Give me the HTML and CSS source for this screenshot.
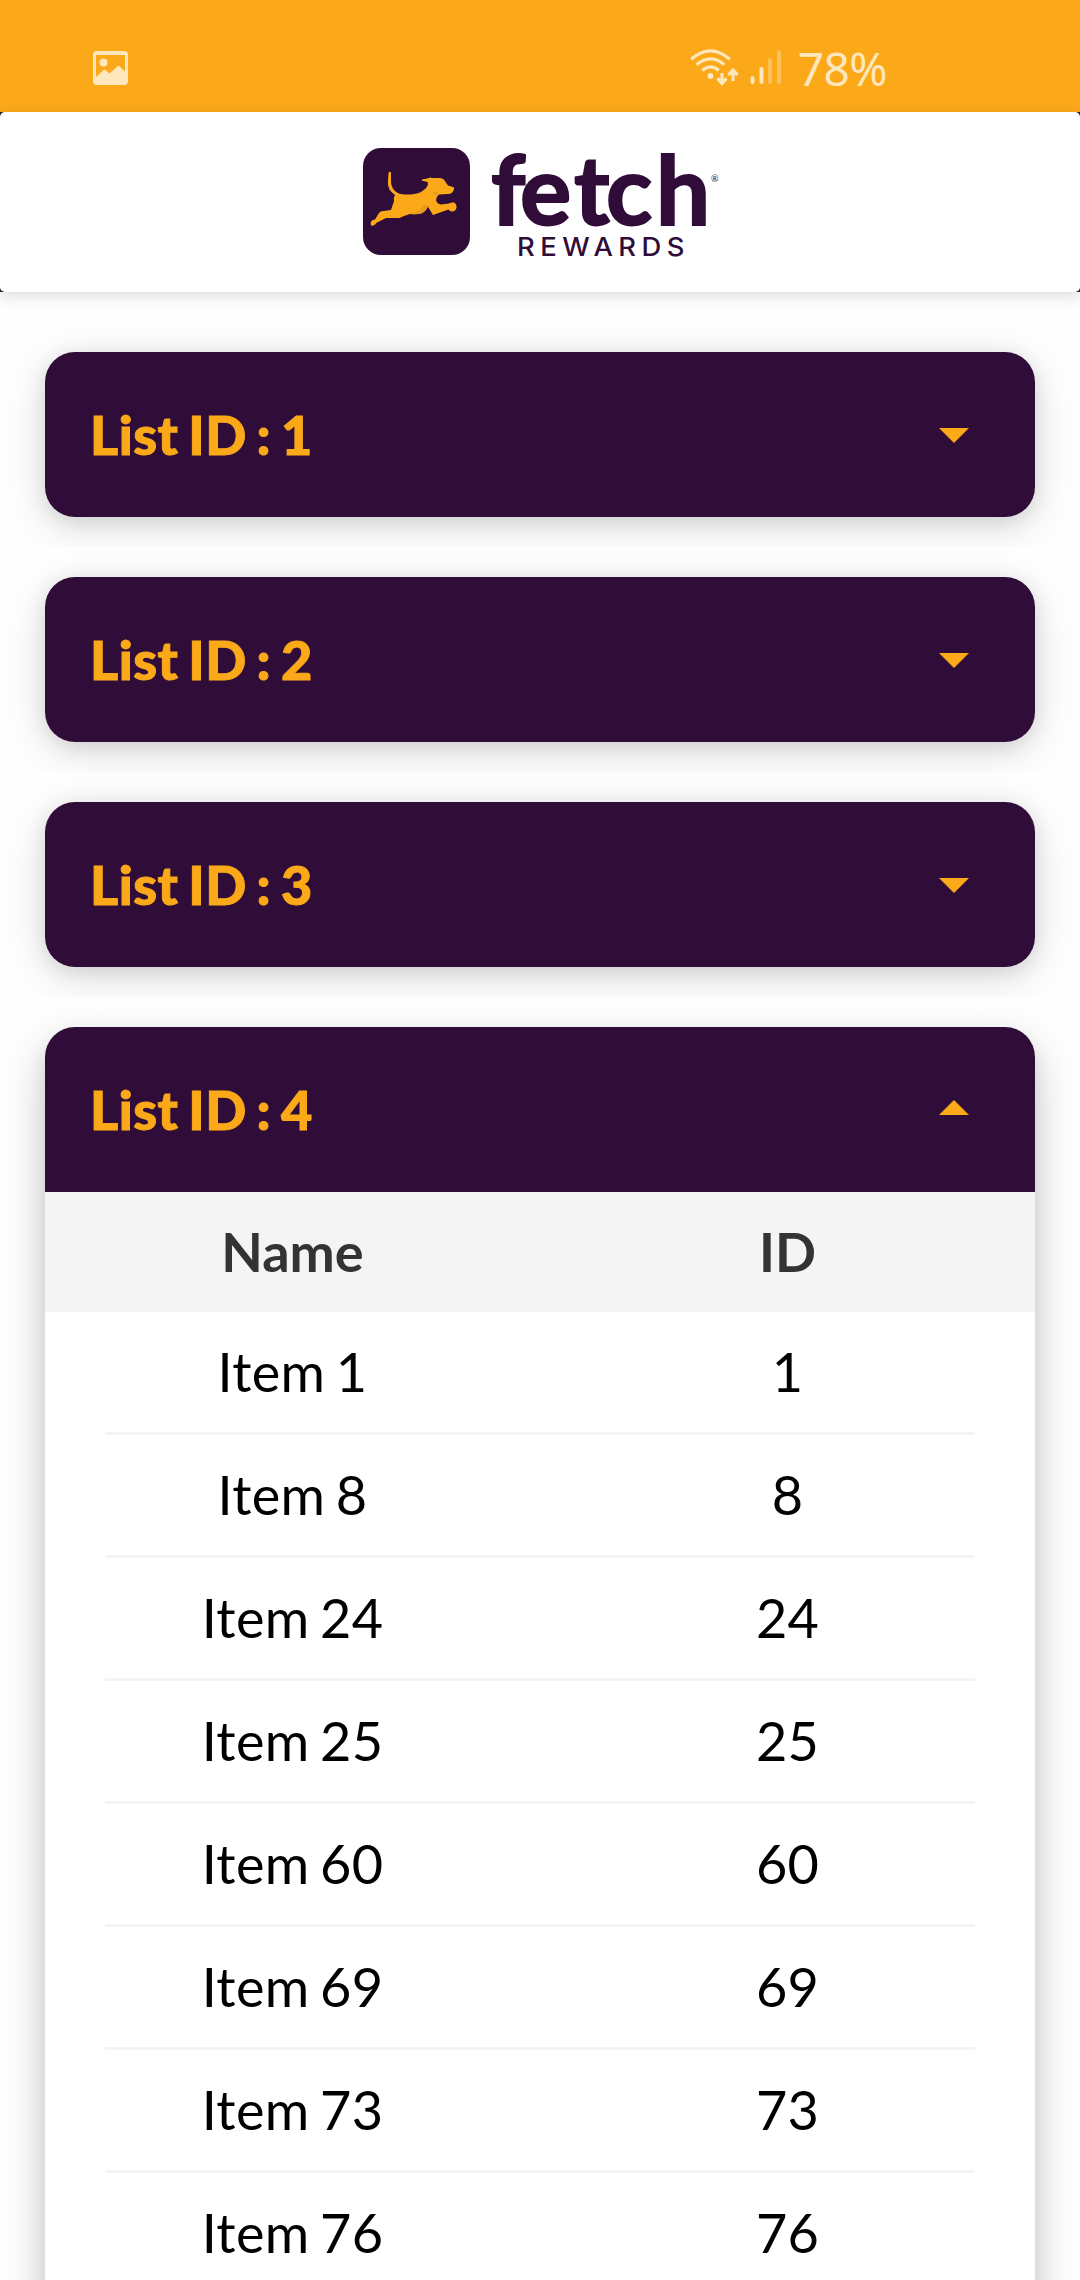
FILE: index.html
```html
<!DOCTYPE html>
<html lang="en">
<head>
<meta charset="utf-8">
<title>Fetch Rewards</title>
<link rel="stylesheet" href="styles.css">
</head>
<body>
<div class="screen">
  <div class="status">
    <svg class="status-photo" width="36" height="34" viewBox="0 0 36 34">
      <path fill-rule="evenodd" d="M4 0H31Q35 0 35 4V30Q35 34 31 34H4Q0 34 0 30V4Q0 0 4 0ZM3 4V26L11.500 18.200L16.500 22.500L25.500 14.500L32 20.500V4Z"/>
      <circle cx="10.500" cy="11.500" r="4"/>
    </svg>
    <svg class="status-wifi" width="50" height="38" viewBox="0 0 50 38">
      <g fill="none" stroke="currentColor" stroke-width="3.300">
        <path d="M1.200 10.200Q20.500 -6.500 39.800 10.200"/>
        <path d="M6.600 15.800Q20.500 4 34.400 15.800"/>
        <path d="M12.200 21.500Q20.500 14.200 28.800 21.500"/>
        <path d="M32 24V34M27.500 29.500L32 34.300L36.500 29.500M43 32V22M38.500 26L43 21.200L47.500 26"/>
      </g>
      <circle cx="20.500" cy="27" r="2.900"/>
    </svg>
    <svg class="status-signal" width="32" height="36" viewBox="0 0 32 36">
      <rect x="0.500" y="26" width="4" height="8" rx="2"/>
      <rect x="9.500" y="17" width="4" height="17" rx="2"/>
      <g opacity=".4"><rect x="18" y="8" width="4" height="26" rx="2"/><rect x="27" y="0" width="4" height="34" rx="2"/></g>
    </svg>
    <span class="battery">78%</span>
  </div>

  <div class="bar-wrap">
    <header class="bar">
      <svg class="logo" width="360" height="120" viewBox="360 142 360 120">
        <rect x="363" y="148" width="107" height="107" rx="18" fill="#300c38"/>
        <path fill="#fba919" d="M388.500 173Q389.500 171 391 172.500V182C391.500 188 395 193 401 194C411 195.500 420 194 425 189C428 186 428.500 184 427.500 182L421.500 180.500Q422 178.500 425 179L429 178Q430 177 432 178H440Q444 178.500 445.500 182L448 185.500L453 187Q455 188 453.500 190.500Q452 194 448 194L439 194.500Q436 197 436 200Q437 204 441 204.500L449 203.500Q451 202 454 202.500Q457 204 456.500 208Q455 212 451.500 211.500Q449 210.500 448.500 209.500L433 215L427.500 206Q425 213 419 214H410L404 216L399.500 218H386L377 222.500Q374 226.500 371 225.500Q369.500 220 375 219.500L379 213Q381 210.500 384 211L391 210L394 201Q393 198 395 195Q387 190 388 181Z"/>
        <path fill="#e69b1b" d="M409 213.500Q420 212 424.500 204.500L428 207Q425 213 419 214Q413 215 409 213.500ZM432 192Q436 190 439 194L436.500 196Z"/>
        <text class="wordmark" x="491 520 574 606 656" y="224.500">fetch</text>
        <text class="tagline" x="517" y="256" textLength="173" lengthAdjust="spacingAndGlyphs">REWARDS</text>
        <text class="mark" x="711" y="182">®</text>
      </svg>
    </header>
  </div>

  <main class="lists">
    <section class="slot"><div class="card"><div class="card-head"><span>List ID : 1</span><i class="caret"></i></div></div></section>
    <section class="slot"><div class="card"><div class="card-head"><span>List ID : 2</span><i class="caret"></i></div></div></section>
    <section class="slot"><div class="card"><div class="card-head"><span>List ID : 3</span><i class="caret"></i></div></div></section>
    <section class="slot">
      <div class="card card-open">
        <div class="card-head"><span>List ID : 4</span><i class="caret caret-up"></i></div>
        <div class="cols cols-head"><span>Name</span><span>ID</span></div>
        <div class="rows">
          <div class="cols"><span>Item 1</span><span>1</span></div>
          <div class="cols"><span>Item 8</span><span>8</span></div>
          <div class="cols"><span>Item 24</span><span>24</span></div>
          <div class="cols"><span>Item 25</span><span>25</span></div>
          <div class="cols"><span>Item 60</span><span>60</span></div>
          <div class="cols"><span>Item 69</span><span>69</span></div>
          <div class="cols"><span>Item 73</span><span>73</span></div>
          <div class="cols"><span>Item 76</span><span>76</span></div>
        </div>
      </div>
    </section>
  </main>
</div>
</body>
</html>
```
FILE: styles.css
```css
* { box-sizing: border-box; }
html, body { margin: 0; height: 2280px; overflow: hidden; }
body { background: #fefefe; font-family: Lato, "Open Sans", sans-serif; }

.screen { width: 1080px; height: 2280px; overflow: hidden; display: flex; flex-direction: column; }

.status {
  flex: none;
  height: 112px;
  padding: 24px 193px 0 93px;
  display: flex;
  align-items: center;
  background: #fba919;
  color: #ffe7bd;
}
.status svg { fill: currentColor; flex: none; }
.status-wifi { margin-left: auto; }
.status-signal { margin-left: 10px; }
.battery { margin-left: 16px; font: 400 46px/56px "Noto Sans", sans-serif; letter-spacing: -.5px; }

.bar-wrap { flex: none; background: #222; box-shadow: 0 4px 14px rgba(0, 0, 0, .14); }
.bar {
  height: 180px;
  display: flex;
  justify-content: center;
  align-items: center;
  background: #fff;
  border-radius: 5px;
}
.logo { display: block; overflow: visible; }
.wordmark { font-size: 96px; font-weight: 700; fill: #300c38; stroke: #300c38; stroke-width: 2px; }
.tagline { font: 500 25px Inter, sans-serif; letter-spacing: 5px; fill: #300c38; }
.mark { font-size: 9px; fill: #300c38; }

.lists { padding-top: 30px; }
.slot { padding: 30px 45px; overflow: hidden; }
.card {
  border-radius: 30px;
  box-shadow: 0 10px 44px rgba(0, 0, 0, .13), 0 4px 20px rgba(0, 0, 0, .1);
}
.card-head {
  height: 165px;
  padding: 0 66px 0 45px;
  display: flex;
  align-items: center;
  justify-content: space-between;
  background: #300c38;
  border-radius: 30px;
  color: #fba919;
  font-size: 54px;
  font-weight: 900;
  letter-spacing: .5px;
  word-spacing: -3.5px;
}
.card-head span { padding-bottom: 1px; -webkit-text-stroke: 1px #fba919; }
.caret { width: 30px; height: 15px; margin-top: 2px; background: #fba919; clip-path: polygon(0 0, 100% 0, 50% 100%); }
.caret-up { clip-path: polygon(50% 0, 100% 100%, 0 100%); margin: 0 0 4px; }

.card-open { background: #fff; padding-bottom: 60px; box-shadow: 0 16px 44px rgba(0, 0, 0, .2), 0 12px 20px rgba(0, 0, 0, .08); }
.card-open .card-head { border-radius: 30px 30px 0 0; }
.cols { display: grid; grid-template-columns: 1fr 1fr; align-items: center; text-align: center; font-size: 54px; letter-spacing: .3px; word-spacing: -3.5px; }
.cols span { padding-bottom: 2px; }
.cols-head { height: 120px; background: #f4f4f4; color: #333; font-weight: 700; letter-spacing: 0; }
.rows { padding: 0 60px; }
.rows .cols { height: 123px; border-bottom: 3px solid #f4f4f4; color: #000; }
.rows .cols span:first-child { margin-left: -60px; }
.rows .cols span:last-child { margin-right: -60px; }
```
